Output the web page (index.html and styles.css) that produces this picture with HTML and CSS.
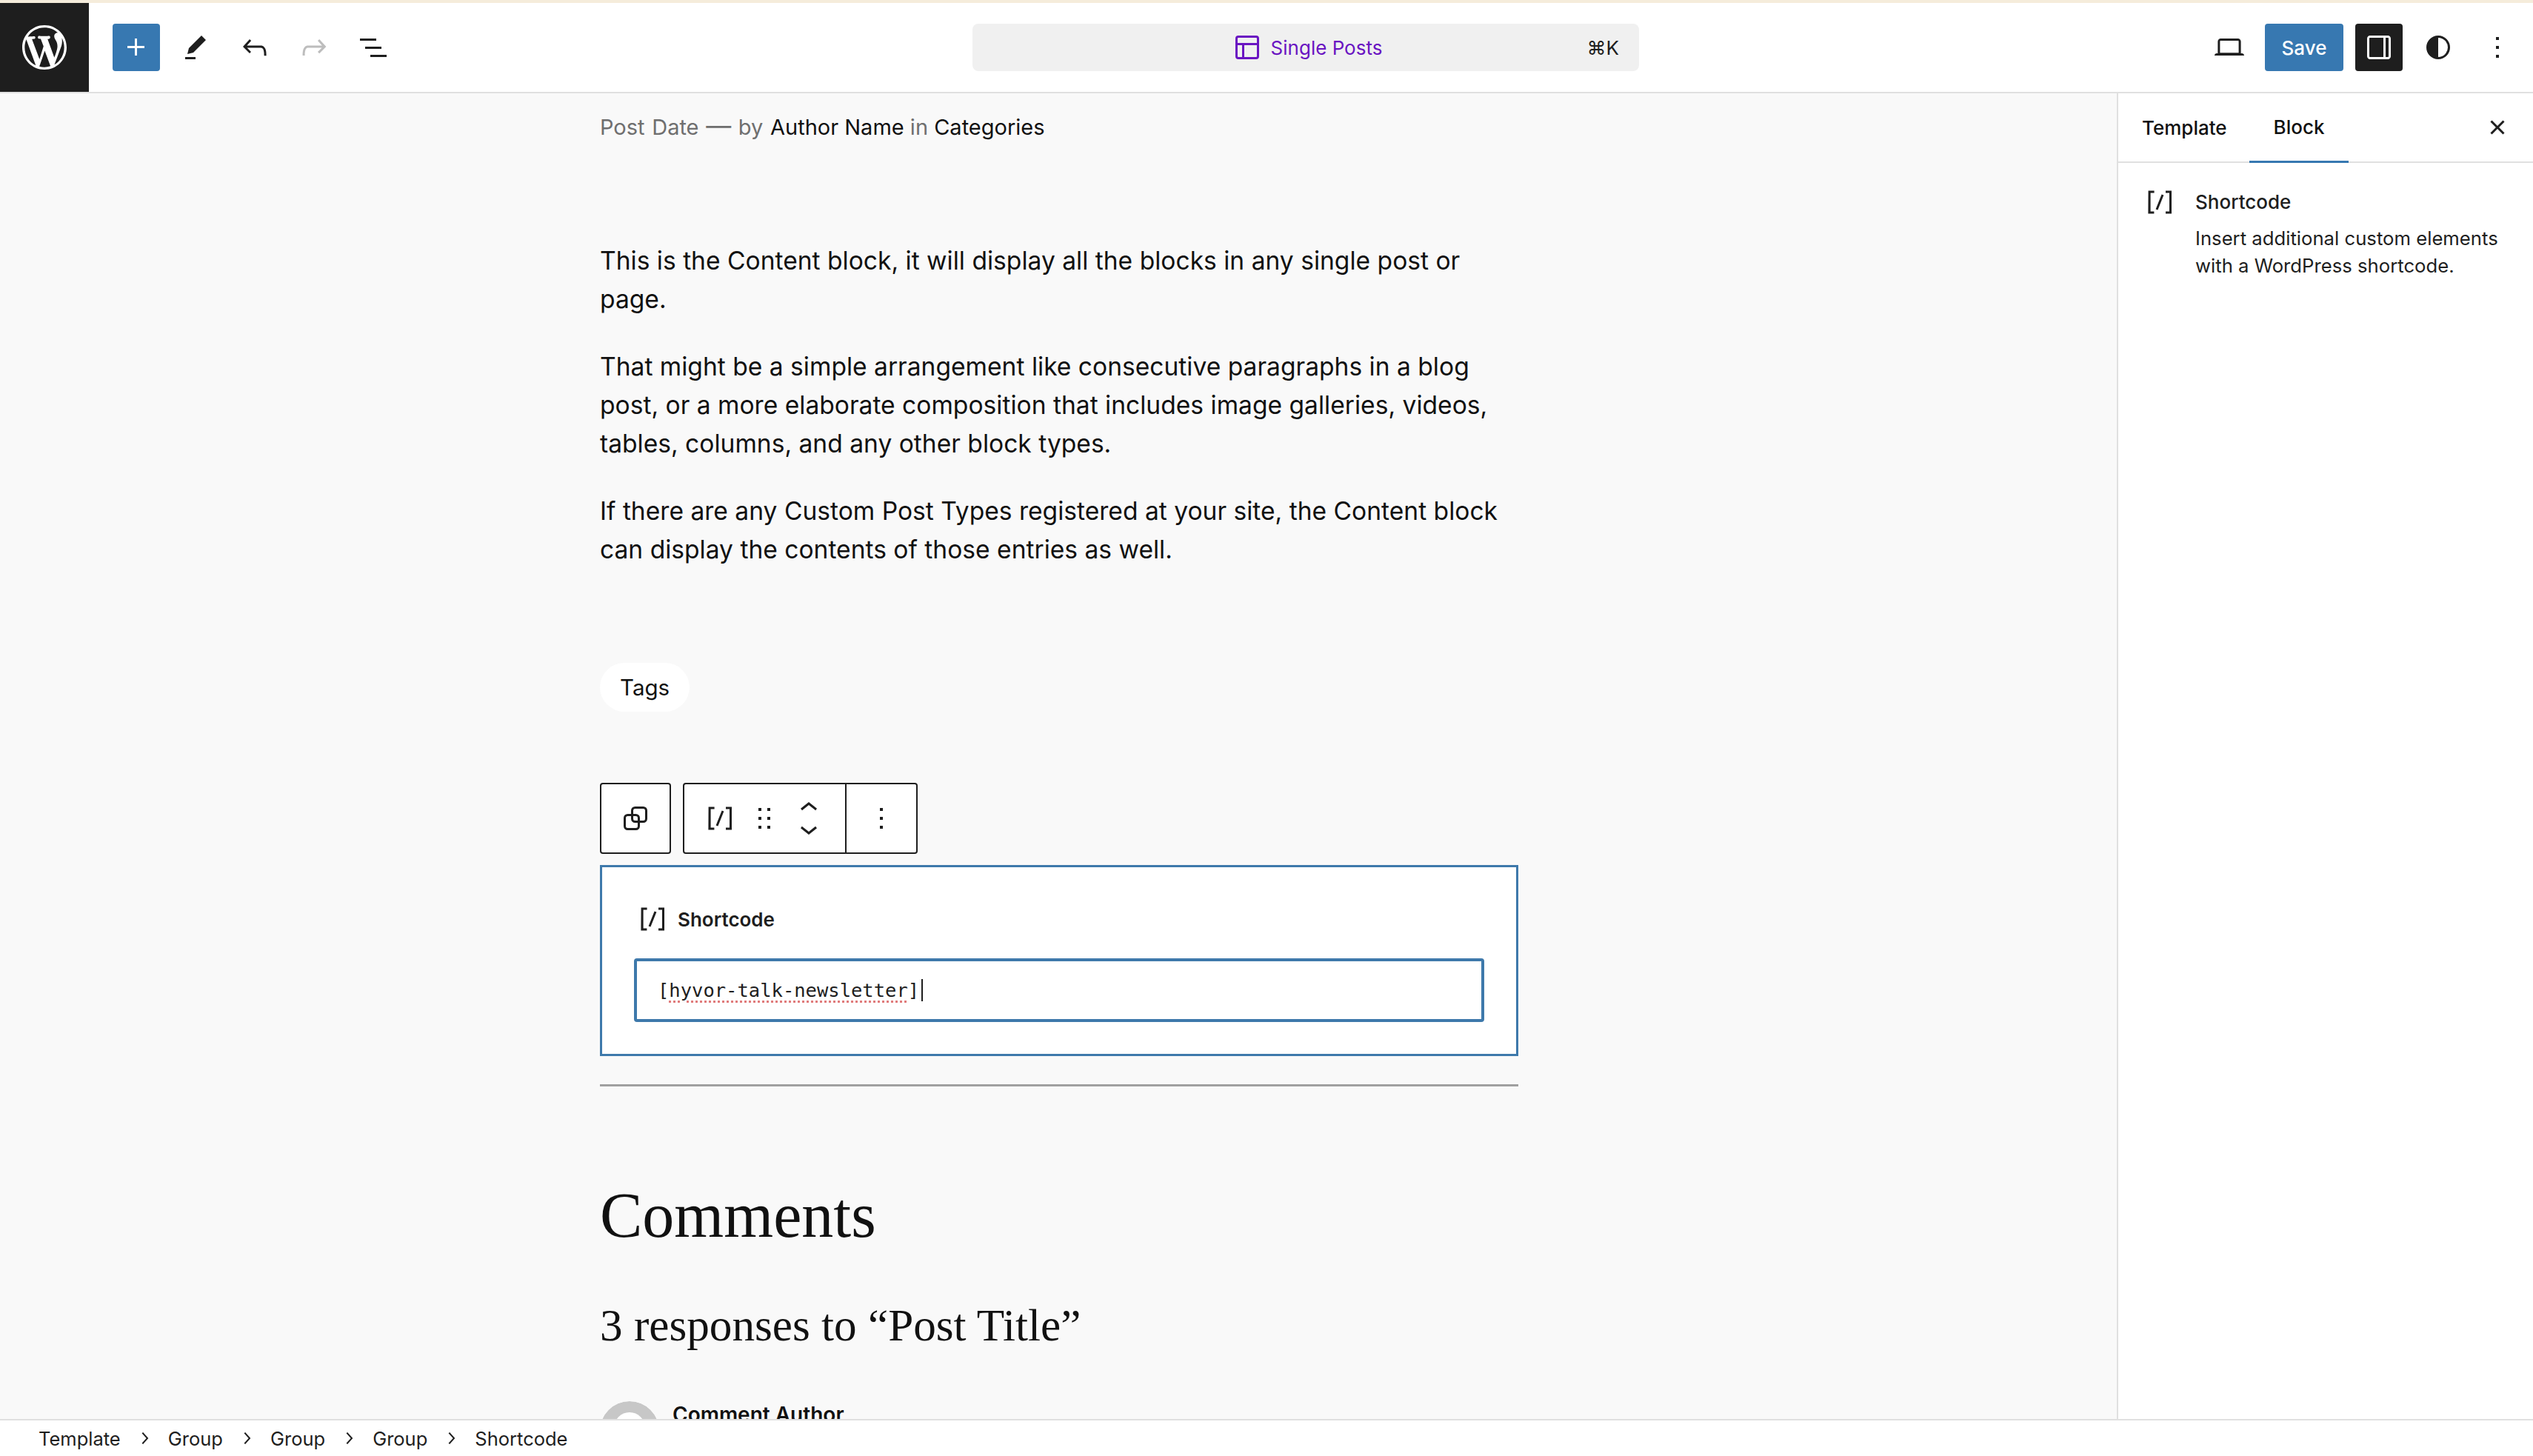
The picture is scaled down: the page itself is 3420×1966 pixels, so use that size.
FILE: index.html
```html
<!DOCTYPE html>
<html lang="en">
<head>
  <meta charset="UTF-8">
  <title>Single Posts - Editor</title>
  <link rel="stylesheet" href="styles.css">
</head>
<body>

  <!-- Top bar -->
  <header class="topbar">
    <div class="logo">
      <svg viewBox="-2 -2 24 24" width="72" height="72"><path fill="#fff" d="M20 10c0-5.51-4.49-10-10-10C4.48 0 0 4.49 0 10c0 5.52 4.48 10 10 10 5.51 0 10-4.48 10-10zM7.78 15.37L4.37 6.22c.55-.02 1.17-.08 1.17-.08.5-.06.44-1.13-.06-1.11 0 0-1.45.11-2.37.11-.18 0-.37 0-.58-.01C4.12 2.69 6.87 1.11 10 1.11c2.33 0 4.45.87 6.05 2.34-.68-.11-1.65.39-1.65 1.58 0 .74.45 1.36.9 2.1.35.61.55 1.36.55 2.46 0 1.49-1.4 5-1.4 5l-3.03-8.37c.54-.02.82-.17.82-.17.5-.05.44-1.25-.06-1.22 0 0-1.44.12-2.38.12-.87 0-2.33-.12-2.33-.12-.5-.03-.56 1.2-.06 1.22l.92.08 1.26 3.41zM17.41 10c.24-.64.74-1.87.43-4.25.7 1.29 1.05 2.71 1.05 4.25 0 3.29-1.73 6.24-4.4 7.78.97-2.59 1.94-5.2 2.92-7.78zM6.1 18.09C3.12 16.65 1.11 13.53 1.11 10c0-1.3.23-2.48.72-3.59C3.25 10.3 4.67 14.2 6.1 18.09zm4.03-6.63l2.58 6.98c-.86.29-1.76.45-2.71.45-.79 0-1.57-.11-2.29-.33.81-2.38 1.62-4.74 2.42-7.1z"/></svg>
    </div>

    <div class="tools">
      <button class="icon-btn primary"><svg viewBox="0 0 24 24" width="48" height="48"><path d="M11 12.5V17.5H12.5V12.5H17.5V11H12.5V6H11V11H6V12.5H11Z"/></svg></button>
      <button class="icon-btn"><svg viewBox="0 0 24 24" width="48" height="48"><path d="m19 7-3-3-8.5 8.5-1 4 4-1L19 7Zm-7 11.5H5V20h7v-1.5Z"/></svg></button>
      <button class="icon-btn"><svg viewBox="0 0 24 24" width="48" height="48"><path d="M18.3 11.7c-.6-.6-1.4-.9-2.3-.9H6.7l2.9-3.3-1.1-1-4.5 5L8.5 16l1-1-2.7-2.7H16c.5 0 .9.2 1.3.5 1 1 1 3.4 1 4.5v.3h1.5v-.2c0-1.5 0-4.3-1.5-5.7z"/></svg></button>
      <button class="icon-btn disabled"><svg viewBox="0 0 24 24" width="48" height="48"><path d="M15.6 6.5l-1.1 1 2.9 3.3H8c-.9 0-1.7.3-2.3.9-1.4 1.5-1.4 4.2-1.4 5.6v.2h1.5v-.3c0-1.1 0-3.5 1-4.5.3-.3.7-.5 1.3-.5h9.2L14.5 15l1.1 1.1 4.6-4.6-4.6-5z"/></svg></button>
      <button class="icon-btn"><svg viewBox="0 0 24 24" width="48" height="48"><path d="M3 6h11v1.5H3V6Zm3.5 5.5h11V13h-11v-1.5ZM21 17H10v1.5h11V17Z"/></svg></button>
    </div>

    <div class="command-bar">
      <div class="command-title">
        <svg viewBox="0 0 24 24" width="48" height="48"><path d="M18 5.5H6a.5.5 0 0 0-.5.5v3h13V6a.5.5 0 0 0-.5-.5Zm.5 5H10v8h8a.5.5 0 0 0 .5-.5v-7.5Zm-10 0h-3V18a.5.5 0 0 0 .5.5h2.5v-8ZM6 4h12a2 2 0 0 1 2 2v12a2 2 0 0 1-2 2H6a2 2 0 0 1-2-2V6a2 2 0 0 1 2-2Z"/></svg>
        <span>Single Posts</span>
      </div>
      <span class="shortcut">⌘K</span>
    </div>

    <div class="actions">
      <button class="icon-btn"><svg viewBox="0 0 24 24" width="48" height="48"><path d="M20.5 16h-.7V8c0-1.1-.9-2-2-2H6.2c-1.1 0-2 .9-2 2v8h-.7c-.8 0-1.5.7-1.5 1.5h20c0-.8-.7-1.5-1.5-1.5zM5.7 8c0-.3.2-.5.5-.5h11.6c.3 0 .5.2.5.5v7.6H5.7V8z"/></svg></button>
      <button class="save-btn">Save</button>
      <button class="icon-btn dark"><svg viewBox="0 0 24 24" width="48" height="48"><path d="M18 4H6c-1.1 0-2 .9-2 2v12c0 1.1.9 2 2 2h12c1.1 0 2-.9 2-2V6c0-1.1-.9-2-2-2zm-3 14.5H6c-.3 0-.5-.2-.5-.5V6c0-.3.2-.5.5-.5h9v13zm3.5-.5c0 .3-.2.5-.5.5h-1.500v-13H18c.3 0 .5.2.5.5v12z"/></svg></button>
      <button class="icon-btn"><svg viewBox="0 0 24 24" width="48" height="48"><path fill-rule="evenodd" d="M12 4a8 8 0 1 0 0 16 8 8 0 0 0 0-16Zm0 1.5a6.5 6.5 0 0 1 0 13v-13Z"/></svg></button>
      <button class="icon-btn"><svg viewBox="0 0 24 24" width="48" height="48"><path d="M13 19h-2v-2h2v2zm0-6h-2v-2h2v2zm0-6h-2V5h2v2z"/></svg></button>
    </div>
  </header>

  <div class="workspace">

    <!-- Editor canvas -->
    <main class="canvas">
      <div class="column">
        <p class="post-meta"><span class="meta-date">Post Date <span class="dash">—</span> by </span><a>Author Name</a> in <a>Categories</a></p>

        <div class="post-content">
          <p>This is the Content block, it will display all the blocks in any single post or page.</p>
          <p>That might be a simple arrangement like consecutive paragraphs in a blog post, or a more elaborate composition that includes image galleries, videos, tables, columns, and any other block types.</p>
          <p>If there are any Custom Post Types registered at your site, the Content block can display the contents of those entries as well.</p>
        </div>

        <span class="tag-pill">Tags</span>

        <!-- Block toolbar -->
        <div class="block-toolbar">
          <div class="toolbar-group">
            <button class="toolbar-btn wide">
              <svg class="outline-icon" viewBox="0 0 24 24" width="48" height="48"><rect x="4.75" y="9.75" width="9.500" height="9.500" rx="2"/><rect x="9.750" y="4.75" width="9.500" height="9.500" rx="2"/></svg>
            </button>
          </div>
          <div class="toolbar-group">
            <button class="toolbar-btn shortcode-btn"><svg viewBox="0 0 24 24" width="48" height="48"><path d="M16 4.2v1.5h2.5v12.5H16v1.5h4V4.2h-4zM4.2 19.8h4v-1.5H5.8V5.8h2.5V4.2h-4l-.1 15.6zm5.1-3.1l1.4.6 4-10-1.4-.6-4 10z"/></svg></button>
            <button class="toolbar-btn drag-btn"><svg viewBox="0 0 24 24" width="48" height="48"><path d="M8 7h2V5H8v2zm0 6h2v-2H8v2zm0 6h2v-2H8v2zm6-14v2h2V5h-2zm0 8h2v-2h-2v2zm0 6h2v-2h-2v2z"/></svg></button>
            <div class="mover">
              <svg viewBox="0 0 24 24" width="48" height="48"><path d="M6.5 12.4L12 8l5.5 4.4-.9 1.2L12 10l-4.5 3.6-1-1.2z"/></svg>
              <svg viewBox="0 0 24 24" width="48" height="48"><path d="M17.5 11.6L12 16l-5.5-4.4.9-1.2L12 14l4.5-3.6 1 1.2z"/></svg>
            </div>
            <button class="toolbar-btn more-btn"><svg viewBox="0 0 24 24" width="48" height="48"><path d="M13 19h-2v-2h2v2zm0-6h-2v-2h2v2zm0-6h-2V5h2v2z"/></svg></button>
          </div>
        </div>

        <!-- Shortcode block -->
        <div class="shortcode-block">
          <div class="shortcode-label">
            <svg viewBox="0 0 24 24" width="48" height="48"><path d="M16 4.2v1.5h2.5v12.5H16v1.5h4V4.2h-4zM4.2 19.8h4v-1.5H5.8V5.8h2.5V4.2h-4l-.1 15.6zm5.1-3.1l1.4.6 4-10-1.4-.6-4 10z"/></svg>
            <span>Shortcode</span>
          </div>
          <div class="shortcode-input">[<span class="misspelt">hyvor-talk-newsletter</span>]<span class="caret"></span></div>
        </div>

        <hr class="separator">

        <h2 class="comments-title">Comments</h2>
        <h3 class="responses-title">3 responses to “Post Title”</h3>

        <div class="comment">
          <svg class="avatar" viewBox="0 0 80 80" width="80" height="80"><circle cx="40" cy="40" r="40" fill="#c7c7c7"/><circle cx="40" cy="36" r="21" fill="#fff"/></svg>
          <strong>Comment Author</strong>
        </div>
      </div>
    </main>

    <!-- Settings sidebar -->
    <aside class="sidebar">
      <div class="tabs">
        <span class="tab">Template</span>
        <span class="tab active">Block</span>
        <button class="icon-btn close-btn"><svg viewBox="0 0 24 24" width="48" height="48"><path d="M12 13.06l3.712 3.713 1.061-1.06L13.061 12l3.712-3.712-1.06-1.06L12 10.938 8.288 7.227l-1.061 1.06L10.939 12l-3.712 3.712 1.06 1.061L12 13.061z"/></svg></button>
      </div>
      <div class="block-card">
        <svg viewBox="0 0 24 24" width="48" height="48"><path d="M16 4.2v1.5h2.5v12.5H16v1.5h4V4.2h-4zM4.2 19.8h4v-1.5H5.8V5.8h2.5V4.2h-4l-.1 15.6zm5.1-3.1l1.4.6 4-10-1.4-.6-4 10z"/></svg>
        <div>
          <h4>Shortcode</h4>
          <p>Insert additional custom elements with a WordPress shortcode.</p>
        </div>
      </div>
    </aside>
  </div>

  <!-- Breadcrumbs -->
  <footer class="breadcrumbs">
    <span>Template</span>
    <svg viewBox="0 0 24 24" width="32" height="32"><path d="M10.6 6L9.4 7l4.6 5-4.6 5 1.2 1 5.4-6z"/></svg>
    <span>Group</span>
    <svg viewBox="0 0 24 24" width="32" height="32"><path d="M10.6 6L9.4 7l4.6 5-4.6 5 1.2 1 5.4-6z"/></svg>
    <span>Group</span>
    <svg viewBox="0 0 24 24" width="32" height="32"><path d="M10.6 6L9.4 7l4.6 5-4.6 5 1.2 1 5.4-6z"/></svg>
    <span>Group</span>
    <svg viewBox="0 0 24 24" width="32" height="32"><path d="M10.6 6L9.4 7l4.6 5-4.6 5 1.2 1 5.4-6z"/></svg>
    <span>Shortcode</span>
  </footer>

</body>
</html>
```

FILE: styles.css
```css
* {
  box-sizing: border-box;
  margin: 0;
  padding: 0;
}

html, body {
  height: 100%;
}

body {
  display: flex;
  flex-direction: column;
  overflow: hidden;
  font-family: Inter, "Liberation Sans", sans-serif;
  font-size: 26px;
  color: #1e1e1e;
  background-color: #fff;
}

button {
  border: none;
  background: none;
  font: inherit;
  cursor: pointer;
}

svg {
  display: block;
  flex-shrink: 0;
  fill: currentColor;
}

/* Top bar */
.topbar {
  display: flex;
  align-items: center;
  flex-shrink: 0;
  height: 126px;
  border-top: 4px solid #f5ecdb;
  border-bottom: 2px solid #e0e0e0;
  background-color: #fff;
}

.logo {
  display: flex;
  align-items: center;
  justify-content: center;
  width: 120px;
  height: 120px;
  background-color: #1e1e1e;
}

.tools {
  display: flex;
  gap: 16px;
  width: 416px;
  margin-left: 32px;
}

.icon-btn {
  display: flex;
  align-items: center;
  justify-content: center;
  width: 64px;
  height: 64px;
  border-radius: 4px;
  color: #1e1e1e;
}

.icon-btn.primary {
  color: #fff;
  background-color: #3778b1;
}

.icon-btn.disabled {
  color: #bdbdbd;
}

.icon-btn.dark {
  color: #fff;
  background-color: #1e1e1e;
}

.command-bar {
  position: relative;
  display: flex;
  align-items: center;
  justify-content: center;
  width: 900px;
  height: 64px;
  margin-left: 745px;
  border-radius: 8px;
  background-color: #f0f0f0;
}

.command-title {
  display: flex;
  align-items: center;
  gap: 8px;
  color: #6a14c2;
}

.shortcut {
  position: absolute;
  right: 27px;
  top: 17px;
}

.actions {
  display: flex;
  align-items: center;
  gap: 16px;
  margin-left: auto;
  padding-right: 16px;
}

.save-btn {
  width: 106px;
  height: 64px;
  border-radius: 4px;
  color: #fff;
  font-weight: 500;
  background-color: #3778b1;
}

/* Canvas */
.workspace {
  display: flex;
  flex: 1;
  min-height: 0;
}

.canvas {
  flex: 1;
  overflow: hidden;
  background-color: #f9f9f9;
}

.column {
  width: 1240px;
  margin-left: 810px;
  color: #111;
}

.post-meta {
  margin-top: 24px;
  font-size: 29px;
  line-height: 44px;
  color: #6f6f6f;
}

.post-meta a {
  color: #111;
}

.meta-date {
  word-spacing: 1.5px;
}

.dash {
  font-size: 34px;
  line-height: 1;
}

.post-content {
  margin-top: 132px;
  font-size: 33.6px;
  line-height: 52px;
}

.post-content p + p {
  margin-top: 39px;
}

.tag-pill {
  display: inline-block;
  margin-top: 127px;
  padding: 0 27px;
  border-radius: 34px;
  font-size: 29.5px;
  line-height: 66px;
  background-color: #fff;
}

/* Block toolbar */
.block-toolbar {
  display: flex;
  gap: 16px;
  margin-top: 96px;
}

.toolbar-group {
  display: flex;
  height: 96px;
  border: 2px solid #1e1e1e;
  border-radius: 4px;
  background-color: #fff;
}

.toolbar-btn {
  display: flex;
  align-items: center;
  justify-content: center;
  height: 92px;
  color: #1e1e1e;
}

.toolbar-btn.wide {
  width: 92px;
}

.outline-icon {
  fill: none;
  stroke: #1e1e1e;
  stroke-width: 1.5;
}

.shortcode-btn {
  width: 72px;
  margin-left: 12px;
}

.drag-btn {
  width: 48px;
}

.mover {
  display: flex;
  flex-direction: column;
  align-items: center;
  justify-content: center;
  width: 72px;
  margin-right: 13px;
  color: #1e1e1e;
}

.mover svg {
  margin: -10px 0;
}

.more-btn {
  width: 96px;
  border-left: 2px solid #1e1e1e;
}

/* Shortcode block */
.shortcode-block {
  height: 258px;
  margin-top: 15px;
  padding: 46px 43px 0;
  border: 3px solid #3e79ab;
  background-color: #fff;
}

.shortcode-label {
  display: flex;
  align-items: center;
  gap: 10px;
  height: 48px;
  margin-left: 1px;
  font-size: 26px;
  font-weight: 600;
  color: #1e1e1e;
}

.shortcode-input {
  display: flex;
  align-items: center;
  height: 86px;
  margin-top: 29px;
  padding-left: 28px;
  border: 4px solid #3e79ab;
  border-radius: 4px;
  font-family: "DejaVu Sans Mono", monospace;
  font-size: 25.5px;
  color: #1e1e1e;
  white-space: pre;
}

.misspelt {
  text-decoration: underline dotted #e07b7b 3px;
  text-underline-offset: 5px;
}

.caret {
  width: 2px;
  height: 30px;
  margin-left: 3px;
  background-color: #1e1e1e;
}

.separator {
  height: 3px;
  margin-top: 38px;
  border: none;
  background-color: #a0a0a0;
}

.comments-title {
  margin-top: 122px;
  font-family: "Liberation Serif", serif;
  font-size: 86px;
  font-weight: 400;
  line-height: 104px;
}

.responses-title {
  margin-top: 58px;
  font-family: "Liberation Serif", serif;
  font-size: 61.2px;
  font-weight: 400;
  line-height: 76px;
}

.comment {
  display: flex;
  gap: 18px;
  margin-top: 65px;
  font-size: 28px;
  line-height: 36px;
}

.comment strong {
  font-weight: 600;
}

.avatar {
  border-radius: 50%;
}

/* Sidebar */
.sidebar {
  flex-shrink: 0;
  width: 562px;
  border-left: 2px solid #e0e0e0;
  background-color: #fff;
}

.tabs {
  position: relative;
  display: flex;
  height: 94px;
  border-bottom: 2px solid #e0e0e0;
  font-weight: 500;
}

.tab {
  display: flex;
  align-items: center;
  height: 92px;
  padding: 0 32px;
  color: #111;
}

.tab.active {
  height: 94px;
  margin-left: -2px;
  padding: 0 33px;
  border-bottom: 3px solid #3778b1;
}

.close-btn {
  position: absolute;
  right: 16px;
  top: 14px;
}

.block-card {
  display: flex;
  gap: 24px;
  padding: 29px 32px 0 32px;
}

.block-card h4 {
  margin-top: 6px;
  font-size: 26px;
  font-weight: 500;
  line-height: 36px;
}

.block-card p {
  margin-top: 12px;
  font-size: 25.7px;
  line-height: 37px;
}

/* Breadcrumbs */
.breadcrumbs {
  display: flex;
  align-items: center;
  gap: 16px;
  flex-shrink: 0;
  height: 50px;
  padding-left: 52px;
  border-top: 2px solid #e0e0e0;
  font-size: 25.5px;
  background-color: #fff;
}
```
